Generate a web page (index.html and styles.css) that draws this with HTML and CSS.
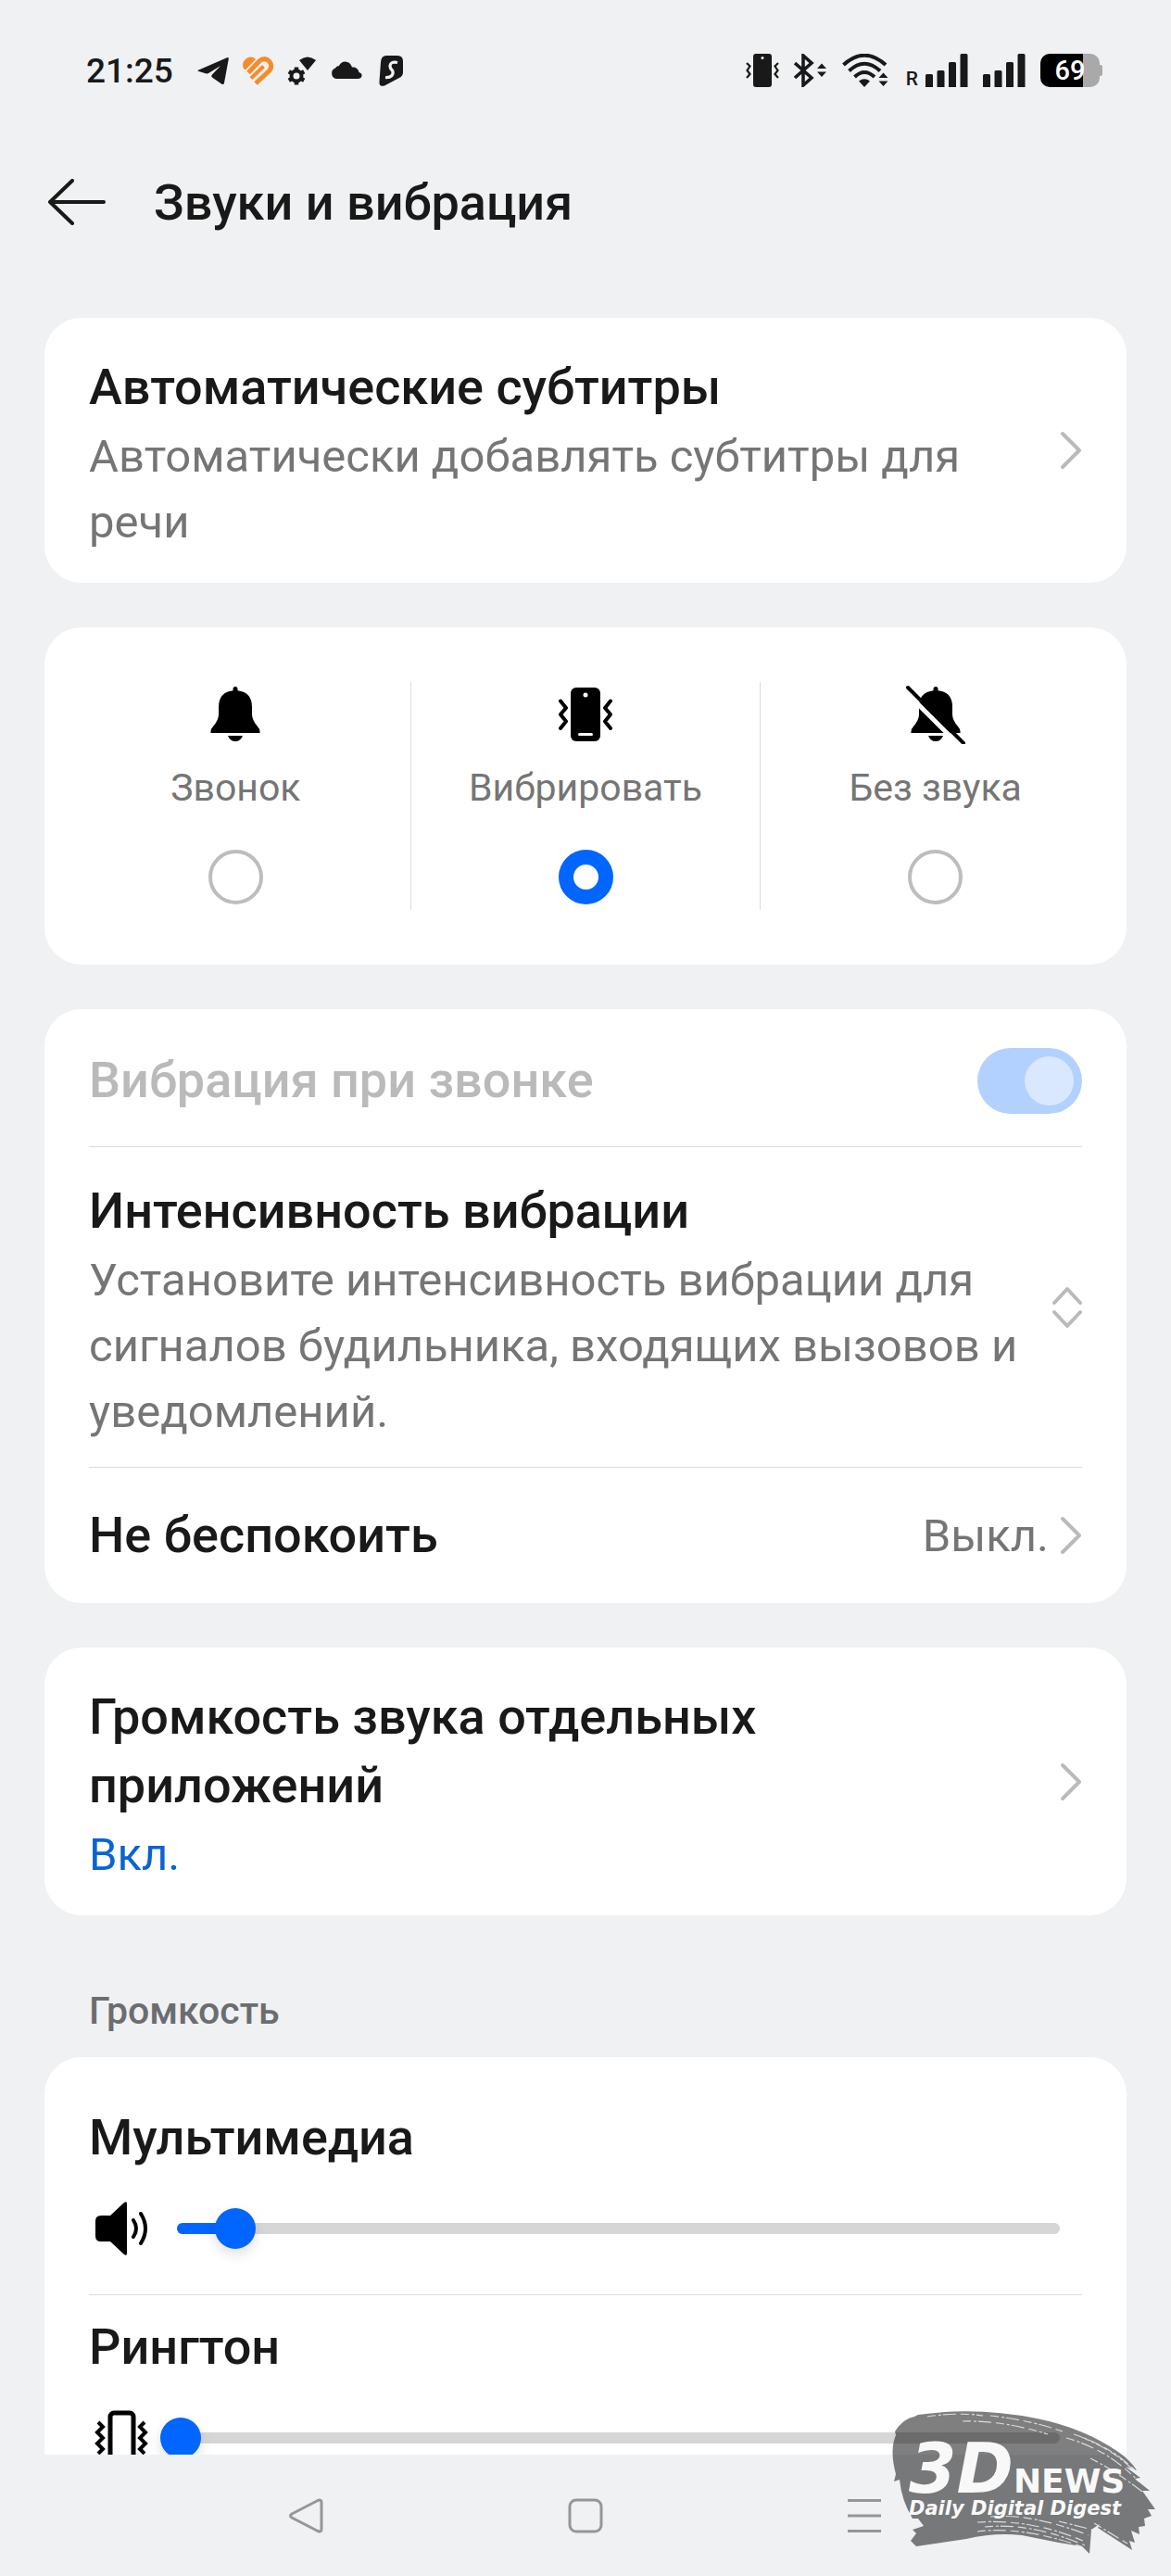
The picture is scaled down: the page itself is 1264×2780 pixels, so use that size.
FILE: index.html
```html
<!DOCTYPE html>
<html lang="ru">
  <head>
    <meta charset="UTF-8" />
    <meta name="viewport" content="width=device-width, initial-scale=1.0" />
    <title>Звуки и вибрация</title>
    <link rel="stylesheet" href="styles.css">
  </head>
  <body>
    <div class="status-bar">
      <div class="status-left">
        <span class="clock">21:25</span>
        <svg width="34" height="34" viewBox="0 0 34 34">
          <path d="M1.500 16.500 32 3.200Q34 2.500 33.800 4.500L29 30.500Q28.500 33 26 31.500L16 24.500Q14.500 23 16 21.500L25 12 12.500 19.800Q11 20.800 9 20.300L1.500 18Q-.5 17.200 1.500 16.500Z" fill="#191919" />
        </svg>
        <svg width="34" height="34" viewBox="0 0 34 34">
          <path d="M2 15A8.500 8.500 0 0 1 14 4L15 5 4 16.500Z" fill="#f68b29" />
          <g fill="none" stroke="#f68b29" stroke-width="5">
            <path d="M7 19.500 19.500 6.500Q25 2.500 29.500 7 34 12.500 29.500 17.500L15 31" />
            <path d="M10 25.500 23.500 12.500" stroke-width="4" />
          </g>
        </svg>
        <svg width="34" height="34" viewBox="0 0 34 34">
          <path d="M14 6Q23 -1 32 6L23 17Z" fill="#191919" />
          <g stroke="#191919" fill="none">
            <circle cx="11" cy="23" r="5.500" stroke-width="4" />
            <path d="M11 13.500V17M11 29V32.500M2.800 18.300 5.800 20M16.200 26 19.200 27.700M2.800 27.700 5.800 26M16.200 20 19.200 18.300" stroke-width="4.500" />
          </g>
        </svg>
        <svg width="34" height="34" viewBox="0 0 34 34">
          <path d="M6 26A6 6 0 0 1 5 14.500Q6 12 9 12 11 7.500 15.500 7.500 21 7.500 23 13.500 29 13 30.500 19 34 20 33.500 23 33 26 29 26Z" fill="#191919" />
        </svg>
        <svg width="34" height="34" viewBox="0 0 34 34">
          <path d="M12 1H24Q30 1 30 7V19Q30 23 26 25L10 33.500Q4 35 4.500 29L6 8Q6.500 1 12 1Z" fill="#191919" />
          <path d="M24 8.500Q16.500 7 16 12 16 15 18.500 17 20 20 18 22.500 15.500 25 11 24.500" fill="none" stroke="#eff1f3" stroke-width="3.200" />
        </svg>
      </div>
      <div class="status-right">
        <svg width="36" height="36" viewBox="0 0 36 36">
          <rect x="8" width="20" height="36" rx="3" fill="#191919" />
          <circle cx="18" cy="4.500" r="1.500" fill="#eff1f3" />
          <path d="M1 10 4.500 13.500 1.500 18 4.500 22 1 26M35 10 31.500 13.500 34.500 18 31.500 22 35 26" fill="none" stroke="#191919" stroke-width="2.200" />
        </svg>
        <svg width="36" height="36" viewBox="0 0 36 36">
          <path d="M1 10 19 26 10 34V2L19 10 1 26" fill="none" stroke="#191919" stroke-width="3.600" />
          <path d="M25 16 30 10.500 35 16ZM25 19.500H35L30 25Z" fill="#191919" />
        </svg>
        <svg width="50" height="36" viewBox="0 0 50 36">
          <g fill="none" stroke="#191919" stroke-width="4">
            <path d="M1.500 12Q24 -8.500 47 12" />
            <path d="M7.500 18.500Q24 3 41 18.500" />
            <path d="M13.500 25Q24 15 35 25" />
          </g>
          <path d="M18 29.500Q24 25 30 29.500L24 36Z" fill="#191919" />
          <path d="M39.500 26 44.500 20.500 49.500 26ZM39.500 29.500H49.500L44.500 35Z" fill="#191919" />
        </svg>
        <div class="signal">
          <span class="roaming">R</span>
          <svg width="46" height="36" viewBox="0 0 46 36">
            <path d="M1.500 22H6.500Q8 22 8 23.500V36H0V23.500Q0 22 1.500 22ZM14 18H19Q20.500 18 20.500 19.500V36H12.500V19.500Q12.500 18 14 18ZM26.500 9H31.500Q33 9 33 10.500V36H25V10.500Q25 9 26.500 9ZM39 0H44Q45.500 0 45.500 1.500V36H37.500V1.500Q37.500 0 39 0Z" fill="#191919" />
          </svg>
        </div>
        <svg width="46" height="36" viewBox="0 0 46 36">
          <path d="M1.500 22H6.500Q8 22 8 23.500V36H0V23.500Q0 22 1.500 22ZM14 18H19Q20.500 18 20.500 19.500V36H12.500V19.500Q12.500 18 14 18ZM26.500 9H31.500Q33 9 33 10.500V36H25V10.500Q25 9 26.500 9ZM39 0H44Q45.500 0 45.500 1.500V36H37.500V1.500Q37.500 0 39 0Z" fill="#191919" />
        </svg>
        <div class="battery"><span class="battery-level">69</span></div>
      </div>
    </div>

    <header class="header">
      <button class="back" type="button" aria-label="Назад">
        <svg width="62" height="50" viewBox="0 0 62 50">
          <path d="M26 2 2 25 26 48M2 25H60" fill="none" stroke="#191919" stroke-width="4" stroke-linecap="round" stroke-linejoin="round" />
        </svg>
      </button>
      <h1>Звуки и вибрация</h1>
    </header>

    <main class="content">
      <section class="card">
        <a class="row" href="#">
          <span class="row-text">
            <span class="title">Автоматические субтитры</span>
            <span class="summary">Автоматически добавлять субтитры для речи</span>
          </span>
          <svg class="chevron" width="24" height="42" viewBox="0 0 24 42"><path d="M3 3 21 21 3 39" /></svg>
        </a>
      </section>

      <section class="card modes">
        <label class="mode">
          <svg width="64" height="64" viewBox="0 0 64 64">
            <path d="M32 2Q34.500 2 34.500 4.500V6.200Q50 8 50 24V32Q50 38 56 45 59 48 58.500 52H5.500Q5 48 8 45 14 38 14 32V24Q14 8 29.500 6.200V4.500Q29.500 2 32 2ZM24 55H40Q37.500 61 32 61T24 55Z" />
          </svg>
          <span class="mode-name">Звонок</span>
          <input type="radio" name="mode">
        </label>
        <label class="mode">
          <svg width="64" height="64" viewBox="0 0 64 64">
            <rect x="16" y="3" width="32" height="58" rx="6" />
            <circle cx="32" cy="11" r="2.500" fill="#fff" />
            <path d="M25.500 53.500H38.500" stroke="#fff" stroke-width="3" stroke-linecap="round" />
            <path d="M5 17.500 11 25 5 32 11 39.500 5 47M59 17.500 53 25 59 32 53 39.500 59 47" fill="none" stroke="#000" stroke-width="4" stroke-linecap="round" stroke-linejoin="round" />
          </svg>
          <span class="mode-name">Вибрировать</span>
          <input type="radio" name="mode" checked>
        </label>
        <label class="mode">
          <svg width="64" height="64" viewBox="0 0 64 64">
            <path d="M32 2Q34.500 2 34.500 4.500V6.200Q50 8 50 24V32Q50 38 56 45 59 48 58.500 52H5.500Q5 48 8 45 14 38 14 32V24Q14 8 29.500 6.200V4.500Q29.500 2 32 2ZM24 55H40Q37.500 61 32 61T24 55Z" />
            <path d="M-2 6 58 66" stroke="#fff" stroke-width="5" />
            <path d="M2 3 62 63" stroke="#000" stroke-width="4" stroke-linecap="round" />
          </svg>
          <span class="mode-name">Без звука</span>
          <input type="radio" name="mode">
        </label>
      </section>

      <section class="card">
        <div class="row single disabled">
          <label class="title" for="ringVibration">Вибрация при звонке</label>
          <input class="switch" type="checkbox" role="switch" id="ringVibration" checked disabled>
        </div>
        <a class="row intensity" href="#">
          <span class="row-text">
            <span class="title">Интенсивность вибрации</span>
            <span class="summary">Установите интенсивность вибрации для сигналов будильника, входящих вызовов и уведомлений.</span>
          </span>
          <svg class="chevron" width="32" height="46" viewBox="0 0 32 46"><path d="M2 18 16 3 30 18M2 28 16 43 30 28" /></svg>
        </a>
        <a class="row single" href="#">
          <span class="title">Не беспокоить</span>
          <span class="value">Выкл.
            <svg class="chevron" width="24" height="42" viewBox="0 0 24 42"><path d="M3 3 21 21 3 39" /></svg>
          </span>
        </a>
      </section>

      <section class="card">
        <a class="row" href="#">
          <span class="row-text narrow">
            <span class="title">Громкость звука отдельных приложений</span>
            <span class="summary on">Вкл.</span>
          </span>
          <svg class="chevron" width="24" height="42" viewBox="0 0 24 42"><path d="M3 3 21 21 3 39" /></svg>
        </a>
      </section>

      <h2 class="section-name">Громкость</h2>

      <section class="card volumes">
        <div class="volume">
          <label class="title" for="media">Мультимедиа</label>
          <div class="volume-row">
            <svg width="64" height="64" viewBox="0 0 64 64">
              <path d="M13 18H23L38 4Q41 2 41 5V59Q41 62 38 60L23 46H13Q7 46 7 40V24Q7 18 13 18Z" />
              <path d="M48 23Q54 32 48 41M56 16Q66 32 56 48" fill="none" stroke="#000" stroke-width="4" stroke-linecap="round" />
            </svg>
            <div class="slider">
              <div class="track"><div class="fill" style="width: 6%"></div></div>
              <input type="range" id="media" min="0" max="1000" value="62">
            </div>
          </div>
        </div>
        <div class="volume">
          <label class="title" for="ringtone">Рингтон</label>
          <div class="volume-row">
            <svg width="64" height="64" viewBox="0 0 64 64">
              <rect x="23" y="5" width="25" height="54" rx="4" fill="none" stroke="#000" stroke-width="5" />
              <path d="M10 15 15 20 9 26 15 32 9 38 15 44 10 49M60 15 55 20 61 26 55 32 61 38 55 44 60 49" fill="none" stroke="#000" stroke-width="4" />
            </svg>
            <div class="slider">
              <div class="track"></div>
              <input type="range" id="ringtone" min="0" max="1000" value="0">
            </div>
          </div>
        </div>
      </section>
    </main>

    <nav class="nav-bar">
      <button type="button" aria-label="Назад">
        <svg width="38" height="38" viewBox="0 0 38 38"><path d="M3 17 31 2.500Q35 1 35 4.500V33.500Q35 37 31 35.500L3 21Q0 19 3 17Z" /></svg>
      </button>
      <button type="button" aria-label="Домой">
        <svg width="38" height="38" viewBox="0 0 38 38"><rect x="2" y="2" width="34" height="34" rx="7" /></svg>
      </button>
      <button type="button" aria-label="Меню">
        <svg width="38" height="38" viewBox="0 0 38 38"><path d="M1 2.500H37M1 19H37M1 35.500H37" /></svg>
      </button>
    </nav>

    <div class="watermark">
      <svg width="284" height="160" viewBox="0 0 284 160">
        <g fill="#000" fill-opacity=".5">
          <path d="M28 6Q90 -3 156 10 206 20 244 46 258 56 264 66L252 62 268 74 262 75 278 88 270 88 284 108 276 108 280 115 272 118 273 126 266 127 267 135 258 131 262 144 256 142 259 152 222 128 224 124 215 130 213 156 205 148 180 144 140 136Q110 133 80 140L26 148 20 142 26 134 22 130 34 126 28 118 22 118Q10 98 8 76L2 78 4 70Q-3 44 4 28L3 24Q12 10 24 8Z" />
        </g>
        <g fill="none" stroke="#f3f4f5" stroke-width="1.200" stroke-opacity=".8" stroke-dasharray="9 3 3 2 14 5">
          <path d="M38 8Q70 3 98 7M76 13Q120 12 168 27M106 7Q150 12 184 24" />
          <path d="M188 31Q234 44 266 78M196 27Q236 40 262 66M204 30Q244 46 266 72M214 53Q240 66 270 89" />
          <path d="M106 116Q150 112 212 136M92 122Q150 118 206 142M100 127Q150 122 208 147M92 132Q140 126 204 148M180 121 216 130M218 123 254 145" />
        </g>
      </svg>
      <div class="watermark-text">
        <div class="brand"><span class="brand-big">3D</span><span class="brand-small">NEWS</span></div>
        <div class="tagline">Daily Digital Digest</div>
      </div>
    </div>
  </body>
</html>
```
FILE: styles.css
```css
* {
  margin: 0;
  padding: 0;
  box-sizing: border-box;
}

body {
  font-family: Roboto, "Noto Sans", sans-serif;
  background-color: #eff1f3;
  color: #191919;
  display: flex;
  flex-direction: column;
  height: 100vh;
  overflow: hidden;
  position: relative;
}

a {
  color: inherit;
  text-decoration: none;
}

button {
  background: none;
  border: none;
}

svg {
  display: block;
  flex-shrink: 0;
}

.status-bar {
  display: flex;
  justify-content: space-between;
  align-items: center;
  padding: 0 74px 0 93px;
  height: 152px;
  flex-shrink: 0;
}

.status-left {
  display: flex;
  align-items: center;
  gap: 14px;
}

.clock {
  font-size: 37px;
  font-weight: 500;
  margin-right: 12px;
}

.status-right {
  display: flex;
  align-items: center;
  gap: 16px;
}

.signal {
  display: flex;
  align-items: flex-end;
  gap: 8px;
  padding-left: 3px;
}

.roaming {
  font-size: 21px;
  line-height: 18px;
  font-weight: 500;
}

.battery {
  width: 64px;
  height: 36px;
  border-radius: 10px;
  background: linear-gradient(90deg, #000 72%, #a9a9a9 72%);
  display: flex;
  align-items: center;
  justify-content: center;
  margin-right: 3px;
  position: relative;
}

.battery::after {
  content: "";
  position: absolute;
  right: -3px;
  top: 12px;
  width: 3px;
  height: 12px;
  border-radius: 0 2px 2px 0;
  background-color: #a9a9a9;
}

.battery-level {
  color: #fff;
  font-size: 29px;
  font-weight: 500;
}

.header {
  display: flex;
  align-items: center;
  gap: 52px;
  padding: 0 52px;
  height: 132px;
  flex-shrink: 0;
}

.header h1 {
  font-size: 54px;
  font-weight: 500;
}

.content {
  flex: 1;
  min-height: 0;
  overflow: hidden;
  padding: 59px 48px 0;
}

.card {
  background-color: #fff;
  border-radius: 40px;
  margin-bottom: 48px;
  padding: 0 48px;
}

.row {
  display: flex;
  align-items: center;
  justify-content: space-between;
  padding: 30px 0;
}

.row + .row,
.volume + .volume {
  border-top: 1px solid #dcdcdc;
}

.row-text {
  max-width: 1010px;
  padding-top: 8px;
}

.narrow {
  max-width: 800px;
}

.title {
  display: block;
  font-size: 54px;
  line-height: 74px;
  font-weight: 500;
}

.summary {
  display: block;
  margin-top: 2px;
  font-size: 49px;
  line-height: 71px;
  color: #757575;
}

.on {
  color: #0a64d2;
}

.single {
  padding: 0;
  height: 147px;
}

.intensity {
  padding: 24px 0;
}

.disabled {
  height: 148px;
  padding-top: 6px;
  color: #bababa;
}

.chevron path {
  fill: none;
  stroke: #bababa;
  stroke-width: 4;
  stroke-linecap: round;
  stroke-linejoin: round;
}

.value {
  display: flex;
  align-items: center;
  gap: 12px;
  font-size: 49px;
  color: #757575;
}

.modes {
  display: flex;
  padding: 59px 18px;
}

.mode {
  flex: 1;
  display: flex;
  flex-direction: column;
  align-items: center;
  padding: 3px 0 6px;
}

.mode + .mode {
  border-left: 1px solid #dcdcdc;
}

.mode-name {
  margin: 18px 0 38px;
  font-size: 41px;
  line-height: 58px;
  color: #757575;
}

.mode input {
  appearance: none;
  width: 59px;
  height: 59px;
  border: 4px solid #bdbdbd;
  border-radius: 50%;
}

.mode input:checked {
  border: 16px solid #0066ff;
}

.switch {
  appearance: none;
  width: 113px;
  height: 71px;
  padding: 9px;
  border-radius: 36px;
  background-color: #b2d1ff;
  display: flex;
  justify-content: flex-end;
}

.switch::before {
  content: "";
  width: 53px;
  height: 53px;
  border-radius: 50%;
  background-color: #dae8ff;
}

.section-name {
  padding: 20px 48px 0;
  margin-bottom: 15px;
  font-size: 41px;
  line-height: 70px;
  font-weight: 500;
  color: #6b6d6f;
}

.volumes {
  padding-top: 31px;
}

.volume {
  padding: 19px 0 10px;
}

.volume-row {
  display: flex;
  align-items: center;
  gap: 13px;
  height: 122px;
}

.slider {
  flex: 1;
  display: grid;
  align-items: center;
  margin-right: 2px;
}

.track,
.slider input {
  grid-area: 1 / 1;
}

.track {
  height: 12px;
  margin: 0 22px 0 18px;
  border-radius: 6px;
  background-color: #d6d6d6;
}

.fill {
  height: 12px;
  border-radius: 6px;
  background-color: #0066ff;
}

.slider input {
  appearance: none;
  background: none;
  width: 100%;
  height: 44px;
}

.slider input::-webkit-slider-thumb {
  appearance: none;
  width: 44px;
  height: 44px;
  border-radius: 50%;
  background-color: #0066ff;
  box-shadow: 0 6px 14px rgba(0, 0, 0, 0.12);
}

.nav-bar {
  display: flex;
  align-items: center;
  padding: 0 180px;
  height: 131px;
  flex-shrink: 0;
}

.nav-bar button {
  flex: 1;
  display: flex;
  justify-content: center;
}

.nav-bar svg {
  fill: none;
  stroke: #969696;
  stroke-width: 3;
}

/* logo over the bottom corner */
.watermark {
  position: absolute;
  right: 17px;
  bottom: 20px;
}

.watermark-text {
  position: absolute;
  left: 18px;
  top: 34px;
  color: #f8f8f8;
  font-family: "DejaVu Sans", sans-serif;
  font-style: italic;
  font-weight: 700;
  white-space: nowrap;
}

.brand {
  display: flex;
  align-items: baseline;
}

.brand-big {
  font-size: 74px;
  line-height: 60px;
}

.brand-small {
  font-size: 36px;
  line-height: 20px;
  font-style: normal;
}

.tagline {
  font-size: 21px;
  line-height: 26px;
}
```
